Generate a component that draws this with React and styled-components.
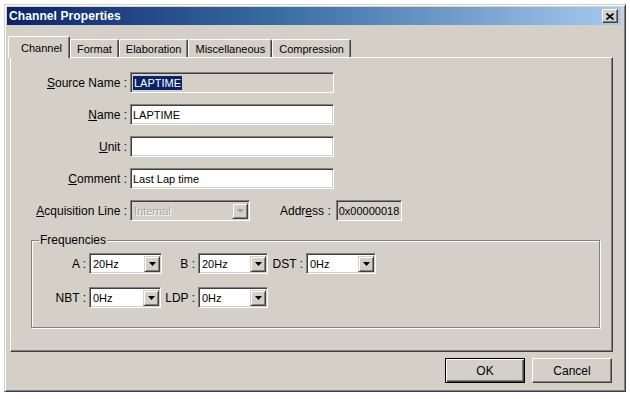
import React from "react";
import styled, { createGlobalStyle } from "styled-components";

const GlobalStyle = createGlobalStyle`
  html, body {
    margin: 0;
    padding: 0;
    background: #ffffff;
  }
  body {
    font-family: "Liberation Sans", Arial, sans-serif;
    font-size: 11px;
    color: #000;
  }
`;

const FACE = "#d4d0c8";

const ArrowIcon = ({ color = "#000" }) => (
  <svg width="7" height="4" viewBox="0 0 7 4">
    <polygon points="0,0 7,0 3.5,4" fill={color} />
  </svg>
);

const CloseIcon = () => (
  <svg width="8" height="7" viewBox="0 0 8 7">
    <path d="M0.5 0.5 L7.5 6.5 M7.5 0.5 L0.5 6.5" stroke="#000" strokeWidth="1.6" />
  </svg>
);

const Combo = ({ value, width, disabled }) => (
  <SCombo $width={width} $disabled={disabled}>
    <SComboText $disabled={disabled}>{value}</SComboText>
    <SDropButton>
      <ArrowIcon color={disabled ? "#a0a0a0" : "#000"} />
    </SDropButton>
  </SCombo>
);

const App = () => {
  return (
    <SPage>
      <GlobalStyle />
      <SWindow>
        <STitleBar>
          <STitle>Channel Properties</STitle>
          <SCloseButton>
            <CloseIcon />
          </SCloseButton>
        </STitleBar>

        <STabs>
          <STab $active>Channel</STab>
          <STab>Format</STab>
          <STab>Elaboration</STab>
          <STab>Miscellaneous</STab>
          <STab>Compression</STab>
        </STabs>

        <SPanel>
          <SForm>
            <SLabel>
              <u>S</u>ource Name :
            </SLabel>
            <SField $disabled>
              <SSelected>LAPTIME</SSelected>
            </SField>

            <SLabel>
              <u>N</u>ame :
            </SLabel>
            <SField>LAPTIME</SField>

            <SLabel>
              <u>U</u>nit :
            </SLabel>
            <SField />

            <SLabel>
              <u>C</u>omment :
            </SLabel>
            <SField>Last Lap time</SField>

            <SLabel>
              <u>A</u>cquisition Line :
            </SLabel>
            <SAcqRow>
              <Combo value="Internal" width={120} disabled />
              <SAddressLabel>
                Addr<u>e</u>ss :
              </SAddressLabel>
              <SAddressBox>0x00000018</SAddressBox>
            </SAcqRow>
          </SForm>

          <SGroup>
            <SLegend>Frequencies</SLegend>
            <SFreqGrid>
              <SFreqLabel>A :</SFreqLabel>
              <Combo value="20Hz" width={73} />
              <SFreqLabel>B :</SFreqLabel>
              <Combo value="20Hz" width={70} />
              <SFreqLabel>DST :</SFreqLabel>
              <Combo value="0Hz" width={70} />

              <SFreqLabel>NBT :</SFreqLabel>
              <Combo value="0Hz" width={72} />
              <SFreqLabel>LDP :</SFreqLabel>
              <Combo value="0Hz" width={70} />
            </SFreqGrid>
          </SGroup>
        </SPanel>

        <SButtonRow>
          <SButton $default>OK</SButton>
          <SButton>Cancel</SButton>
        </SButtonRow>
      </SWindow>
    </SPage>
  );
};

export default App;

const SPage = styled.div`
  padding: 4px 0 0 4px;
`;

const SWindow = styled.div`
  box-sizing: border-box;
  width: 622px;
  height: 388px;
  background: ${FACE};
  border: 1px solid;
  border-color: ${FACE} #404040 #404040 ${FACE};
  box-shadow: inset 1px 1px #ffffff, inset -1px -1px #808080;
  padding: 2px;
  display: flex;
  flex-direction: column;
`;

const STitleBar = styled.div`
  height: 18px;
  display: flex;
  align-items: center;
  justify-content: space-between;
  padding: 0 3px 0 2px;
  margin-right: 2px;
  background: linear-gradient(to right, #0a246a 0%, #3a6ea5 45%, #a6caf0 100%);
`;

const STitle = styled.span`
  color: #ffffff;
  font-weight: bold;
  font-size: 12px;
  letter-spacing: 0.1px;
`;

const SCloseButton = styled.div`
  box-sizing: border-box;
  width: 16px;
  height: 14px;
  display: flex;
  align-items: center;
  justify-content: center;
  background: ${FACE};
  border: 1px solid;
  border-color: #ffffff #404040 #404040 #ffffff;
  box-shadow: inset -1px -1px #808080;
`;

const STabs = styled.div`
  display: flex;
  align-items: flex-end;
  height: 21px;
  margin: 11px 0 0 1px;
  position: relative;
  z-index: 1;
`;

const STab = styled.div`
  box-sizing: border-box;
  height: ${(p) => (p.$active ? "22px" : "18px")};
  margin-bottom: ${(p) => (p.$active ? "-1px" : "0")};
  padding: ${(p) => (p.$active ? "5px 7px 0 12px" : "0 6px 0 6px")};
  display: flex;
  align-items: ${(p) => (p.$active ? "flex-start" : "center")};
  background: ${FACE};
  border-top: 1px solid #ffffff;
  border-left: 1px solid #ffffff;
  border-right: 1px solid #404040;
  box-shadow: inset -1px 0 #808080;
  border-top-left-radius: 2px;
  border-top-right-radius: 2px;
  white-space: nowrap;
`;

const SPanel = styled.div`
  box-sizing: border-box;
  height: 295px;
  margin: 0 10px 0 3px;
  border: 1px solid;
  border-color: #ffffff #404040 #404040 #ffffff;
  box-shadow: inset -1px -1px #808080;
  padding-top: 14px;
`;

const SForm = styled.div`
  display: grid;
  grid-template-columns: 116px auto;
  column-gap: 3px;
  row-gap: 11px;
  align-items: center;
  justify-items: start;
`;

const SLabel = styled.div`
  justify-self: end;
  font-size: 12px;
  white-space: nowrap;
  color: #000;
`;

const SField = styled.div`
  box-sizing: border-box;
  width: 204px;
  height: 21px;
  display: flex;
  align-items: center;
  padding: 0 2px;
  background: ${(p) => (p.$disabled ? FACE : "#ffffff")};
  border: 1px solid;
  border-color: #808080 #ffffff #ffffff #808080;
  box-shadow: inset 1px 1px #404040, inset -1px -1px ${FACE};
  font-size: 11px;
`;

const SSelected = styled.span`
  background: #0a246a;
  color: #ffffff;
  padding: 1px 1px;
`;

const SAcqRow = styled.div`
  display: flex;
  align-items: center;
`;

const SAddressLabel = styled.div`
  margin-left: 30px;
  margin-right: 5px;
  font-size: 12px;
  white-space: nowrap;
`;

const SAddressBox = styled(SField)`
  width: 66px;
  background: ${FACE};
`;

const SCombo = styled.div`
  box-sizing: border-box;
  width: ${(p) => p.$width}px;
  height: 21px;
  display: flex;
  align-items: stretch;
  background: ${(p) => (p.$disabled ? FACE : "#ffffff")};
  border: 1px solid;
  border-color: #808080 #ffffff #ffffff #808080;
  box-shadow: inset 1px 1px #404040, inset -1px -1px ${FACE};
  padding: 2px 1px 1px 2px;
`;

const SComboText = styled.div`
  flex: 1;
  display: flex;
  align-items: center;
  padding-left: 1px;
  font-size: 11px;
  color: ${(p) => (p.$disabled ? "#a8a59e" : "#000")};
  text-shadow: ${(p) => (p.$disabled ? "1px 1px #ffffff" : "none")};
`;

const SDropButton = styled.div`
  box-sizing: border-box;
  width: 16px;
  display: flex;
  align-items: center;
  justify-content: center;
  background: ${FACE};
  border: 1px solid;
  border-color: ${FACE} #404040 #404040 ${FACE};
  box-shadow: inset 1px 1px #ffffff, inset -1px -1px #808080;
`;

const SGroup = styled.fieldset`
  box-sizing: border-box;
  width: 569px;
  height: 95px;
  margin: 12px 0 0 20px;
  padding: 6px 0 0 0;
  border: 1px solid #808080;
  box-shadow: inset 1px 1px #ffffff, 1px 1px #ffffff;
  min-width: 0;
`;

const SLegend = styled.legend`
  margin-left: 7px;
  padding: 0 1px;
  font-size: 12px;
  background: ${FACE};
`;

const SFreqGrid = styled.div`
  display: grid;
  grid-template-columns: 57px 73px 36px 70px 38px 70px;
  row-gap: 13px;
  align-items: center;
`;

const SFreqLabel = styled.div`
  justify-self: end;
  padding-right: 3px;
  font-size: 12px;
  white-space: nowrap;
`;

const SButtonRow = styled.div`
  display: flex;
  justify-content: flex-end;
  gap: 7px;
  margin: 6px 11px 0 0;
`;

const SButton = styled.div`
  box-sizing: border-box;
  width: 80px;
  height: 25px;
  display: flex;
  align-items: center;
  justify-content: center;
  font-size: 12px;
  background: ${FACE};
  border: 1px solid;
  border-color: ${(p) =>
    p.$default ? "#000000" : "#ffffff #404040 #404040 #ffffff"};
  box-shadow: ${(p) =>
    p.$default
      ? "inset 1px 1px #ffffff, inset -1px -1px #404040, inset -2px -2px #808080"
      : "inset -1px -1px #808080"};
`;
